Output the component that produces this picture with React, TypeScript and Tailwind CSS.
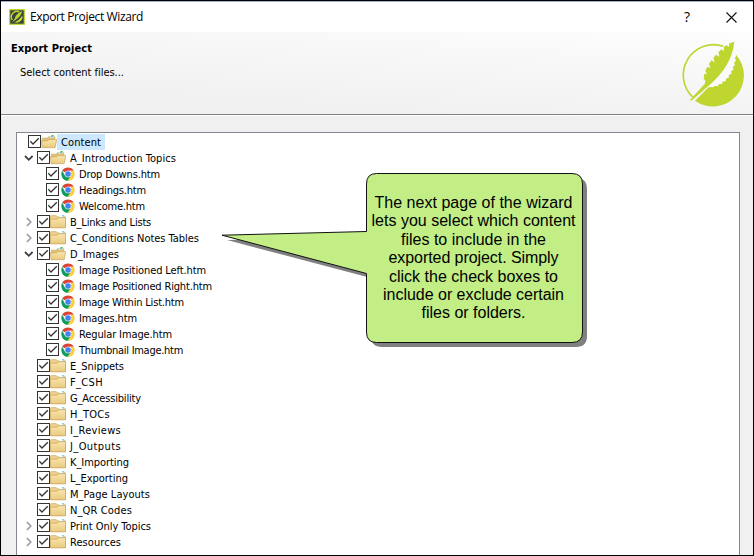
import { useLayoutEffect, useRef, useState } from "react";

type Row = [string, number, number, "open" | "closed" | "", ("folder" | "folderOpen" | "page")];

const rows: Row[] = [
  ["Content", 0, 40, "", "folderOpen"],
  ["A_Introduction Topics", 1, 106, "open", "folderOpen"],
  ["Drop Downs.htm", 2, 81, "", "page"],
  ["Headings.htm", 2, 67, "", "page"],
  ["Welcome.htm", 2, 66, "", "page"],
  ["B_Links and Lists", 1, 81, "closed", "folder"],
  ["C_Conditions Notes Tables", 1, 129, "closed", "folder"],
  ["D_Images", 1, 49, "open", "folderOpen"],
  ["Image Positioned Left.htm", 2, 127, "", "page"],
  ["Image Positioned Right.htm", 2, 133, "", "page"],
  ["Image Within List.htm", 2, 105, "", "page"],
  ["Images.htm", 2, 58, "", "page"],
  ["Regular Image.htm", 2, 93, "", "page"],
  ["Thumbnail Image.htm", 2, 104, "", "page"],
  ["E_Snippets", 1, 54, "", "folder"],
  ["F_CSH", 1, 33, "", "folder"],
  ["G_Accessibility", 1, 71, "", "folder"],
  ["H_TOCs", 1, 40, "", "folder"],
  ["I_Reviews", 1, 51, "", "folder"],
  ["J_Outputs", 1, 51, "", "folder"],
  ["K_Importing", 1, 59, "", "folder"],
  ["L_Exporting", 1, 58, "", "folder"],
  ["M_Page Layouts", 1, 80, "", "folder"],
  ["N_QR Codes", 1, 62, "", "folder"],
  ["Print Only Topics", 1, 81, "closed", "folder"],
  ["Resources", 1, 51, "closed", "folder"],
];

const calloutLines: [string, number][] = [
  ["The next page of the wizard", 198],
  ["lets you select which content", 204],
  ["files to include in the", 145],
  ["exported project. Simply", 170],
  ["click the check boxes to", 169],
  ["include or exclude certain", 181],
  ["files or folders.", 104],
];

/** Text whose tracking is adjusted so that it spans the given width. */
function Fit({ text, width }: { text: string; width: number }) {
  const ref = useRef<HTMLSpanElement>(null);
  const [spacing, setSpacing] = useState(0);
  useLayoutEffect(() => {
    if (ref.current) {
      setSpacing((width - ref.current.getBoundingClientRect().width) / text.length);
    }
  }, [text, width]);
  return (
    <span ref={ref} className="inline-block whitespace-pre" style={{ letterSpacing: `${spacing}px` }}>
      {text}
    </span>
  );
}

function Check() {
  return (
    <svg className="mt-px block h-[13px] w-[13px] shrink-0" viewBox="0 0 13 13">
      <rect x=".5" y=".5" width="12" height="12" fill="#fff" stroke="#333" />
      <path d="M2.3 6.2 5 9 10.8 3.2" fill="none" stroke="#333" strokeWidth="1.3" />
    </svg>
  );
}

function Folder({ open }: { open: boolean }) {
  return (
    <svg className="block h-4 w-4 shrink-0" viewBox="0 0 16 16">
      <defs>
        <linearGradient id="folderFill" x1="0" y1="0" x2="0" y2="1">
          <stop offset="0" stopColor="#fae6b0" />
          <stop offset="1" stopColor="#e9ca7e" />
        </linearGradient>
      </defs>
      {open ? (
        <>
          <path d="M1.3 13.5V4.2h5l1.2-1.4h6.3v9z" fill="#e2c079" stroke="#c4a255" strokeWidth=".6" />
          <path d="M9 2.6h3.4v1.2H9z" fill="#fff" />
          <path d="M10.4 1h2.2v1.3h-2.2z" fill="#3fc24e" />
          <path d="M9.8 2.3h2v1.1h-2z" fill="#35b3e6" />
          <path d="M.3 6.9h6.4l1.2-1.3h7.8l-1.6 8.1H1.3z" fill="url(#folderFill)" stroke="#c9a85c" strokeWidth=".7" />
        </>
      ) : (
        <>
          <path d="M.4 13.6V2.5Q.4 1.6 1.3 1.6H6.3l1 1.2H15.5v10.8z" fill="#ecd091" stroke="#c9a85c" strokeWidth=".6" />
          <path d="M9.3 1.9h4.6v1.2H9.3z" fill="#fff" />
          <path d="M12 1.4h2.3v1H12z" fill="#2ab7e8" />
          <path d="M.4 5.2h7l1.3-1.5h6.8v10.1H.4z" fill="url(#folderFill)" stroke="#c9a85c" strokeWidth=".7" />
        </>
      )}
    </svg>
  );
}

function Chrome() {
  return (
    <svg className="block h-[14px] w-[14px] shrink-0" viewBox="0 0 48 48">
      <circle cx="24" cy="24" r="23" fill="#fff" />
      <path d="M24 24 4.1 12.5A23.500 23.500 0 0 1 43.9 12.5H24z" fill="#db4437" />
      <path d="M4.1 12.5A23.500 23.500 0 0 0 24 47.500L34 29.7 24 34 14 29.7z" fill="#0f9d58" />
      <path d="M43.9 12.5A23.500 23.500 0 0 1 24 47.500L34 29.7 33 14 24 12.5z" fill="#ffcd40" />
      <circle cx="24" cy="24" r="11.5" fill="#f1f1f1" />
      <circle cx="24" cy="24" r="9.500" fill="#4285f4" />
    </svg>
  );
}

function Arrow({ state }: { state: "open" | "closed" | "" }) {
  return (
    <svg className="mt-[3px] block h-[10px] w-[13px] shrink-0" viewBox="0 0 13 10">
      {state === "open" && <path d="M1 3 4.8 6.8 8.6 3" fill="none" stroke="#404040" strokeWidth="1.8" />}
      {state === "closed" && <path d="M3 1.2 6.8 5 3 8.8" fill="none" stroke="#a0a0a0" strokeWidth="1.7" />}
    </svg>
  );
}

function TreeRow({ row }: { row: Row }) {
  const [label, level, width, state, icon] = row;
  const inset = level === 0 ? "pl-[11px]" : level === 1 ? "pl-[7px]" : "pl-[29px]";
  return (
    <div className={`flex h-4 items-start ${inset}`}>
      {level === 1 && <Arrow state={state} />}
      <Check />
      {icon === "page" ? (
        <span className="ml-[2px] mr-1 mt-px"><Chrome /></span>
      ) : (
        <Folder open={icon === "folderOpen"} />
      )}
      <span className={`h-4 leading-[18px] ${level === 0 ? "bg-[#cce8ff] pl-1 pr-1" : icon === "page" ? "" : "pl-1"}`}>
        <Fit text={label} width={width} />
      </span>
    </div>
  );
}

function FeatherLogo() {
  return (
    <svg className="block h-[72px] w-[70px]" viewBox="0 0 210 216">
      <path d="M44 177A91 91 0 0 1 136 25" fill="none" stroke="#bed62f" strokeWidth="5" />
      <path d="M51 188 92 148C118 148 148 128 160 100L174 50A93 93 0 0 1 51 188z" fill="#bed62f" />
      <path d="M168 22C163 66 136 108 93 146L107 148 106 143 121 145 120 138 133 138 132 131 144 129 143 121 153 119 151 111 161 107 159 99 167 95 164 87 171 82 168 74 174 68 171 60 175 50z" fill="#fafafa" />
      <path d="M169 11 154 16 152 27 146 21 137 28 138 40 130 34 121 43 124 56 114 50 106 60 110 73 100 67 93 78 98 91 88 86 82 98 87 109 79 107 77 122 82 128 80 138 36 186 39 189 92 143C130 110 164 68 169 11z" fill="#bed62f" />
    </svg>
  );
}

export default function App() {
  return (
    <div className="relative flex h-[556px] w-[754px] flex-col overflow-hidden border border-black bg-[#f0f0f0] font-['DejaVu_Sans_Condensed','DejaVu_Sans',sans-serif] text-[11px] leading-4 text-black">
      <header className="flex h-[31px] shrink-0 items-center border-t border-[#9eb4d0] bg-white pl-2">
        <svg className="h-4 w-4" viewBox="0 0 16 16">
          <rect x=".7" y=".7" width="14.6" height="14.6" fill="#38423b" stroke="#bed62f" strokeWidth="1.2" />
          <path d="M10.500 3A5.500 5.500 0 0 0 3.4 11" fill="none" stroke="#bed62f" strokeWidth="1.3" />
          <path d="M13.2 2.3C9 3.500 6.500 6.500 5.800 9.500L2.800 13.6 7 10.500C10.500 8.500 12.500 5.500 13.2 2.3z" fill="#bed62f" />
          <path d="M13.3 6.500A5.800 5.800 0 0 1 5.500 13.300C9 11.800 11.500 9.500 13.300 6.500z" fill="#bed62f" />
        </svg>
        <h1 className="ml-[5px] font-['Open_Sans',sans-serif] text-[12px]"><Fit text="Export Project Wizard" width={113} /></h1>
        <span className="ml-auto font-['Open_Sans',sans-serif] text-[14px]">?</span>
        <svg className="ml-[36px] mr-[16px] h-[11px] w-[11px]" viewBox="0 0 11 11">
          <path d="M.5.5l10 10M10.5.5l-10 10" stroke="#111" strokeWidth="1.1" />
        </svg>
      </header>
      <section className="flex h-[84px] shrink-0 border-b border-white bg-[linear-gradient(4deg,#f0f0f0_20%,#fdfdfd)]">
        <div className="flex w-full justify-between border-b border-[#828282]">
          <div className="pl-[10px] pt-[9px]">
            <h2 className="font-bold"><Fit text="Export Project" width={81} /></h2>
            <p className="mt-2 pl-[9px]"><Fit text="Select content files..." width={104} /></p>
          </div>
          <div className="mr-[5px] pt-[6px]"><FeatherLogo /></div>
        </div>
      </section>
      <main className="ml-[15px] mr-[13px] mt-4 grow border border-b-0 border-[#828790] bg-white pt-px">
        {rows.map((row) => <TreeRow key={row[0]} row={row} />)}
      </main>
      <aside className="absolute left-[219px] top-[170px] h-[180px] w-[370px]">
        <svg className="absolute inset-0" width="370" height="180" viewBox="220 171 370 180">
          <path d="M377 178H576Q587 178 587 189V336Q587 347 576 347H382Q371 347 371 336V278L227 240 371 237V189Q371 178 377 178z" fill="#808080" />
          <path d="M376.5 173.500H572Q582.500 173.500 582.500 184V332Q582.500 342.500 572 342.500H376.500Q366.500 342.500 366.500 332V273.500L222 235.200 366.500 231.500V184Q366.500 173.500 376.500 173.500z" fill="#c2ee85" stroke="#111" />
        </svg>
        <div className="absolute left-[145px] top-[23px] flex w-[217px] flex-col items-center font-['Liberation_Sans',Arial,sans-serif] text-[16px] leading-[18.4px]">
          {calloutLines.map(([text, width]) => <Fit key={text} text={text} width={width} />)}
        </div>
      </aside>
    </div>
  );
}
